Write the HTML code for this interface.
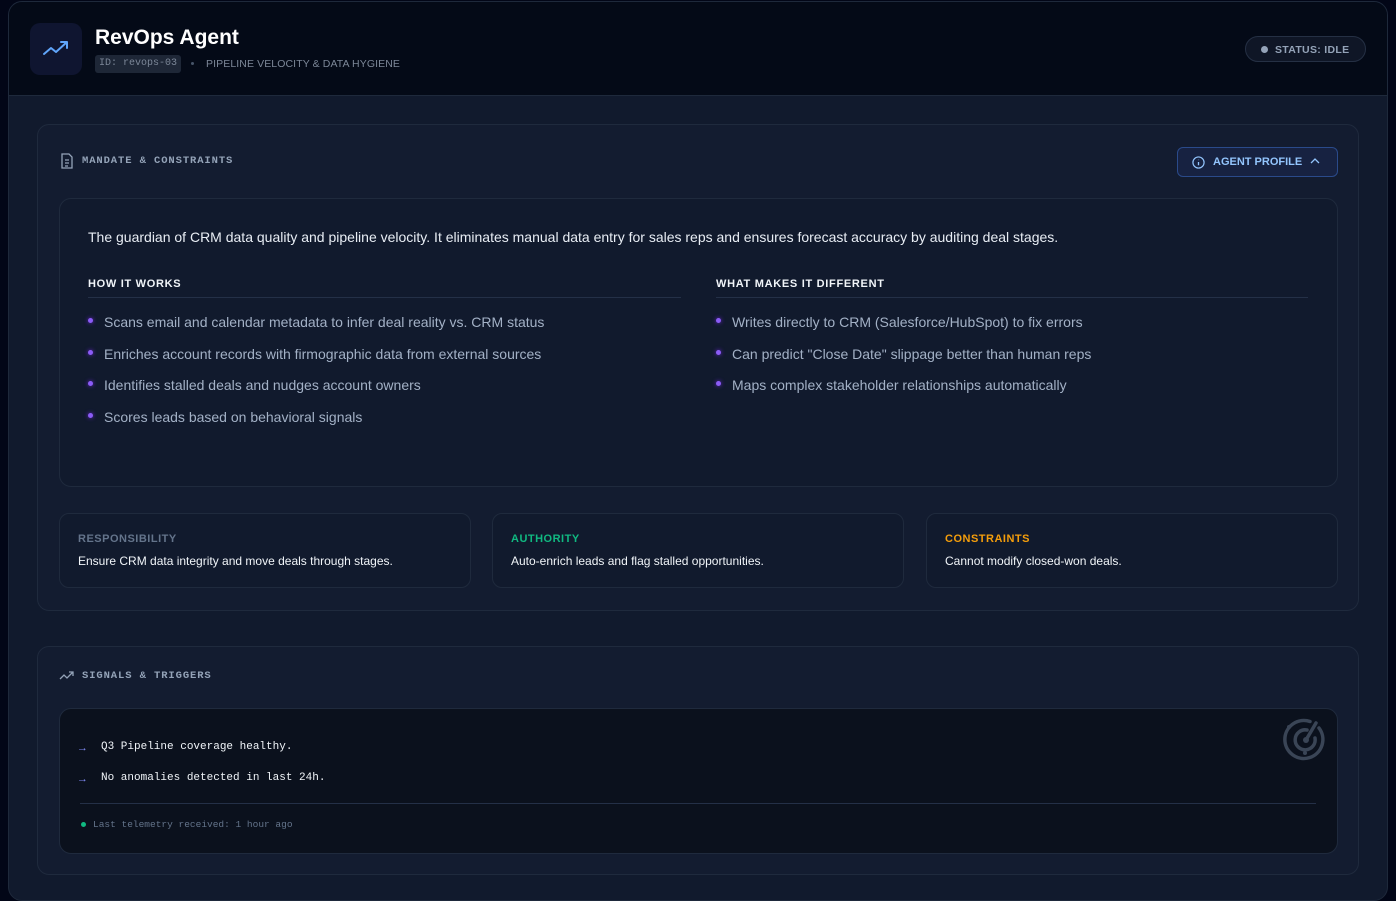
<!DOCTYPE html>
<html><head><meta charset="utf-8"><style>
*{box-sizing:border-box;margin:0;padding:0}
body{width:1396px;height:892px;background:#020617;font-family:"Liberation Sans",sans-serif;overflow:hidden;position:relative}
.mono{font-family:"Liberation Mono",monospace}
.panel{position:absolute;left:8px;top:1px;width:1380px;height:900px;border:1px solid #1e293b;border-radius:14px;background:#111a2d;overflow:hidden}
.wrap{position:absolute;left:-1px;top:-1px;width:1380px;height:900px}
.hdr{position:absolute;left:0;top:0;width:100%;height:95px;background:#040a17;border-bottom:1px solid #1e293b}
.abs{position:absolute}
.card{position:absolute;background:#131c30;border:1px solid #1f2a3d;border-radius:12px}
.sec{position:absolute;font-size:10.5px;font-weight:bold;letter-spacing:.9px;color:#94a3b8;font-family:"Liberation Mono",monospace}
.inner{position:absolute;border:1px solid #1f2a3d;border-radius:12px;background:#111a2d}
.h4{position:absolute;font-size:11px;font-weight:bold;letter-spacing:.7px;color:#f1f5f9}
.li{position:absolute;font-size:14px;color:#a3b1c6}
.li:before{content:"";position:absolute;left:-16px;top:4px;width:5px;height:5px;border-radius:50%;background:#8b5cf6;box-shadow:0 0 4px #6d28d9}
.sc{position:absolute;top:512px;width:412px;height:75px;border:1px solid #1f2a3d;border-radius:10px;background:#111a2d}
.sc .l{position:absolute;left:18px;top:19px;font-size:11px;font-weight:bold;letter-spacing:.5px}
.sc .t{position:absolute;left:18px;top:40px;font-size:12px;color:#f1f5f9}
</style></head><body>
<div class="panel"><div class="wrap">
 <div class="hdr">
  <div class="abs" style="left:22px;top:22px;width:52px;height:52px;border-radius:10px;background:#0f1530">
   <svg width="52" height="52" viewBox="0 0 52 52"><path d="M14 31l7-6 5 4 11-10M31 19h6v6" fill="none" stroke="#60a5fa" stroke-width="2" stroke-linecap="round" stroke-linejoin="round"/></svg>
  </div>
  <div class="abs" style="left:87px;top:25px;font-size:21px;font-weight:bold;color:#fff">RevOps Agent</div>
  <div class="abs mono" style="left:87px;top:54px;width:86px;height:18px;background:#1e2737;border-radius:3px;font-size:10px;color:#7c8798;line-height:18px;text-align:center">ID: revops-03</div>
  <div class="abs" style="left:183px;top:61px;width:3px;height:3px;border-radius:50%;background:#475569"></div>
  <div class="abs" style="left:198px;top:57px;font-size:10.5px;color:#7c8798;letter-spacing:.1px">PIPELINE VELOCITY &amp; DATA HYGIENE</div>
  <div class="abs" style="left:1237px;top:35px;width:121px;height:26px;border:1px solid #253044;border-radius:13px;background:#0f1626">
   <div class="abs" style="left:15px;top:9px;width:7px;height:7px;border-radius:50%;background:#94a3b8"></div>
   <div class="abs" style="left:29px;top:7px;font-size:10.5px;font-weight:bold;color:#94a3b8;letter-spacing:.3px">STATUS: IDLE</div>
  </div>
 </div>

 <div class="card" style="left:29px;top:123px;width:1322px;height:487px">
  <svg class="abs" style="left:22px;top:28px" width="14" height="16" viewBox="0 0 14 16"><path d="M2 1h7l3 3v11H2z M5 7h4M5 10h4M5 13h3" fill="none" stroke="#94a3b8" stroke-width="1.3"/></svg>
  <div class="sec" style="left:44px;top:30px">MANDATE &amp; CONSTRAINTS</div>
  <div class="abs" style="left:1139px;top:22px;width:161px;height:30px;border:1px solid #2a4a8a;border-radius:6px;background:#172241">
   <svg class="abs" style="left:14px;top:8px" width="13" height="13" viewBox="0 0 14 14"><circle cx="7" cy="7" r="6" fill="none" stroke="#93c5fd" stroke-width="1.3"/><path d="M7 6.5v3.5M7 4v.5" stroke="#93c5fd" stroke-width="1.4"/></svg>
   <div class="abs" style="left:35px;top:8px;font-size:11px;font-weight:bold;color:#93c5fd">AGENT PROFILE</div>
   <svg class="abs" style="left:132px;top:9px" width="10" height="8" viewBox="0 0 10 8"><path d="M1 6l4-4 4 4" fill="none" stroke="#93c5fd" stroke-width="1.3"/></svg>
  </div>
  <div class="inner" style="left:21px;top:73px;width:1279px;height:289px">
   <div class="abs" style="left:28px;top:30px;font-size:14px;color:#e8edf4">The guardian of CRM data quality and pipeline velocity. It eliminates manual data entry for sales reps and ensures forecast accuracy by auditing deal stages.</div>
   <div class="h4" style="left:28px;top:79px">HOW IT WORKS</div>
   <div class="abs" style="left:28px;top:98px;width:593px;height:1px;background:#243047"></div>
   <div class="li" style="left:44px;top:115px">Scans email and calendar metadata to infer deal reality vs. CRM status</div>
   <div class="li" style="left:44px;top:147px">Enriches account records with firmographic data from external sources</div>
   <div class="li" style="left:44px;top:178px">Identifies stalled deals and nudges account owners</div>
   <div class="li" style="left:44px;top:210px">Scores leads based on behavioral signals</div>
   <div class="h4" style="left:656px;top:79px">WHAT MAKES IT DIFFERENT</div>
   <div class="abs" style="left:656px;top:98px;width:592px;height:1px;background:#243047"></div>
   <div class="li" style="left:672px;top:115px">Writes directly to CRM (Salesforce/HubSpot) to fix errors</div>
   <div class="li" style="left:672px;top:147px">Can predict "Close Date" slippage better than human reps</div>
   <div class="li" style="left:672px;top:178px">Maps complex stakeholder relationships automatically</div>
  </div>
 </div>
 <div class="sc" style="left:51px"><div class="l" style="color:#64748b">RESPONSIBILITY</div><div class="t">Ensure CRM data integrity and move deals through stages.</div></div>
 <div class="sc" style="left:484px"><div class="l" style="color:#10b981">AUTHORITY</div><div class="t">Auto-enrich leads and flag stalled opportunities.</div></div>
 <div class="sc" style="left:918px"><div class="l" style="color:#f59e0b">CONSTRAINTS</div><div class="t">Cannot modify closed-won deals.</div></div>

 <div class="card" style="left:29px;top:645px;width:1322px;height:229px">
  <svg class="abs" style="left:21px;top:24px" width="16" height="10" viewBox="0 0 16 10"><path d="M1 8l4-4 3 3 6-6M10 1h4v4" fill="none" stroke="#94a3b8" stroke-width="1.3"/></svg>
  <div class="sec" style="left:44px;top:23px">SIGNALS &amp; TRIGGERS</div>
  <div class="abs" style="left:21px;top:61px;width:1279px;height:146px;border:1px solid #1f2a3d;border-radius:12px;background:#0b111d">
   <svg class="abs" style="left:1223px;top:8px" width="46" height="46" viewBox="0 0 46 46"><g fill="none" stroke="#3a4556" stroke-width="3.5" stroke-linecap="round"><path d="M36 11A19 19 0 1 1 27 4.5"/><path d="M32 21A10 10 0 1 1 24 13"/><path d="M23 23L33 6"/></g><circle cx="23" cy="23" r="3" fill="#3a4556"/><circle cx="6" cy="10" r="2" fill="#3a4556"/><circle cx="22" cy="36" r="2" fill="#3a4556"/></svg>
   <div class="abs mono" style="left:19px;top:34px;font-size:11px;color:#818cf8">→</div>
   <div class="abs mono" style="left:41px;top:32px;font-size:11px;color:#f1f5f9">Q3 Pipeline coverage healthy.</div>
   <div class="abs mono" style="left:19px;top:65px;font-size:11px;color:#818cf8">→</div>
   <div class="abs mono" style="left:41px;top:63px;font-size:11px;color:#f1f5f9">No anomalies detected in last 24h.</div>
   <div class="abs" style="left:20px;top:94px;width:1236px;height:1px;background:#243047"></div>
   <div class="abs" style="left:21px;top:113px;width:5px;height:5px;border-radius:50%;background:#10b981"></div>
   <div class="abs mono" style="left:33px;top:110px;font-size:9.5px;color:#64748b">Last telemetry received: 1 hour ago</div>
  </div>
 </div>
</div></div>
</body></html>
